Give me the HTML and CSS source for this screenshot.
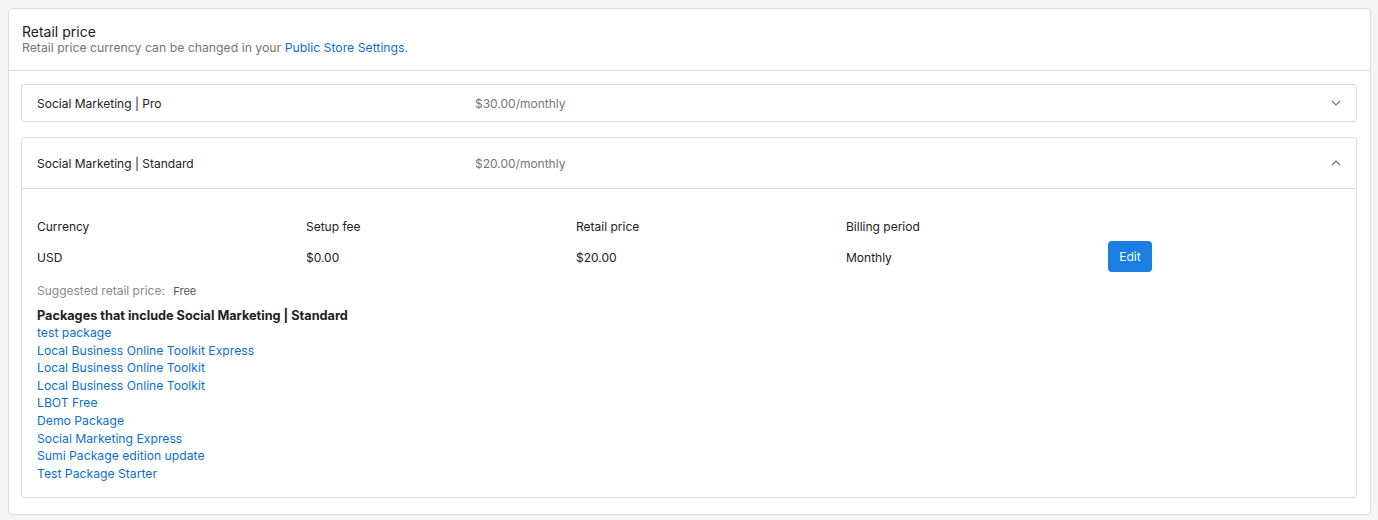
FILE: index.html
```html
<!DOCTYPE html>
<html>
<head>
<meta charset="utf-8">
<link rel="stylesheet" href="styles.css">
</head>
<body>
<div class="card">
  <div class="card-header">
    <div class="title">Retail price</div>
    <div class="subtitle">Retail price currency can be changed in your <a class="link" href="#">Public Store Settings.</a></div>
  </div>
  <div class="card-body">
    <div class="panel">
      <div class="panel-head">
        <span class="name">Social Marketing | Pro</span>
        <span class="price">$30.00/monthly</span>
        <svg class="chev" width="10" height="6" viewBox="0 0 10 6"><path d="M1 1 L5 5 L9 1" fill="none" stroke="#757575" stroke-width="1.2"/></svg>
      </div>
    </div>
    <div class="panel">
      <div class="panel-head open">
        <span class="name">Social Marketing | Standard</span>
        <span class="price">$20.00/monthly</span>
        <svg class="chev" width="10" height="6" viewBox="0 0 10 6"><path d="M1 5 L5 1 L9 5" fill="none" stroke="#757575" stroke-width="1.2"/></svg>
      </div>
      <div class="panel-body">
        <div class="grid">
          <div class="label">Currency</div>
          <div class="label">Setup fee</div>
          <div class="label">Retail price</div>
          <div class="label">Billing period</div>
          <div></div>
          <div class="value">USD</div>
          <div class="value">$0.00</div>
          <div class="value">$20.00</div>
          <div class="value">Monthly</div>
          <div class="value"><button class="btn">Edit</button></div>
        </div>
        <div class="suggested">Suggested retail price: <span class="free">Free</span></div>
        <div class="pk-title">Packages that include Social Marketing | Standard</div>
        <ul class="pk-list">
          <li><a class="link" href="#">test package</a></li>
          <li><a class="link" href="#">Local Business Online Toolkit Express</a></li>
          <li><a class="link" href="#">Local Business Online Toolkit</a></li>
          <li><a class="link" href="#">Local Business Online Toolkit</a></li>
          <li><a class="link" href="#">LBOT Free</a></li>
          <li><a class="link" href="#">Demo Package</a></li>
          <li><a class="link" href="#">Social Marketing Express</a></li>
          <li><a class="link" href="#">Sumi Package edition update</a></li>
          <li><a class="link" href="#">Test Package Starter</a></li>
        </ul>
      </div>
    </div>
  </div>
</div>
</body>
</html>
```
FILE: styles.css
```css
body {
  margin: 0;
  padding: 8px 7px 6px 8px;
  background: #f5f5f5;
  font-family: Inter, "Liberation Sans", sans-serif;
  color: #212121;
}
.card {
  background: #fff;
  border: 1px solid #dcdcdc;
  border-radius: 4px;
}
.card-header {
  padding: 14px 13px 15px;
  border-bottom: 1px solid #dcdcdc;
}
.title {
  font-size: 14px;
  line-height: 17px;
}
.subtitle {
  font-size: 12.25px;
  line-height: 15px;
  color: #757575;
}
.link {
  color: #0b6fd0;
  text-decoration: none;
}
.card-body {
  padding: 13px 13px 16px 12px;
  display: flex;
  flex-direction: column;
  gap: 15px;
}
.panel {
  border: 1px solid #dcdcdc;
  border-radius: 3px;
}
.panel-head {
  display: flex;
  align-items: center;
  height: 36px;
  padding: 0 15px;
  font-size: 12px;
}
.panel-head.open {
  height: 50px;
  border-bottom: 1px solid #dcdcdc;
}
.name {
  width: 438px;
}
.price {
  flex: 1;
  color: #757575;
}
.panel-body {
  padding: 30px 15px 15px;
}
.grid {
  display: grid;
  grid-template-columns: 269px 270px 270px 262px 60px;
  row-gap: 8px;
  align-items: center;
  font-size: 12px;
}
.label, .value {
  line-height: 16px;
}
.value {
  padding-top: 1px;
}
.btn {
  display: block;
  font-family: inherit;
  font-size: 12px;
  color: #fff;
  background: #1a7fe0;
  border: none;
  border-radius: 4px;
  width: 44px;
  height: 31px;
  padding: 0;
  margin-top: -3px;
}
.suggested {
  margin-top: 11px;
  font-size: 12px;
  line-height: 16px;
  color: #8a8a8a;
}
.free {
  font-size: 11px;
  color: #555;
  margin-left: 5px;
}
.pk-title {
  margin-top: 8px;
  font-size: 12.7px;
  font-weight: 700;
  line-height: 17px;
}
.pk-list {
  list-style: none;
  margin: 0;
  padding: 0;
  font-size: 12.2px;
  line-height: 17.6px;
}
```
